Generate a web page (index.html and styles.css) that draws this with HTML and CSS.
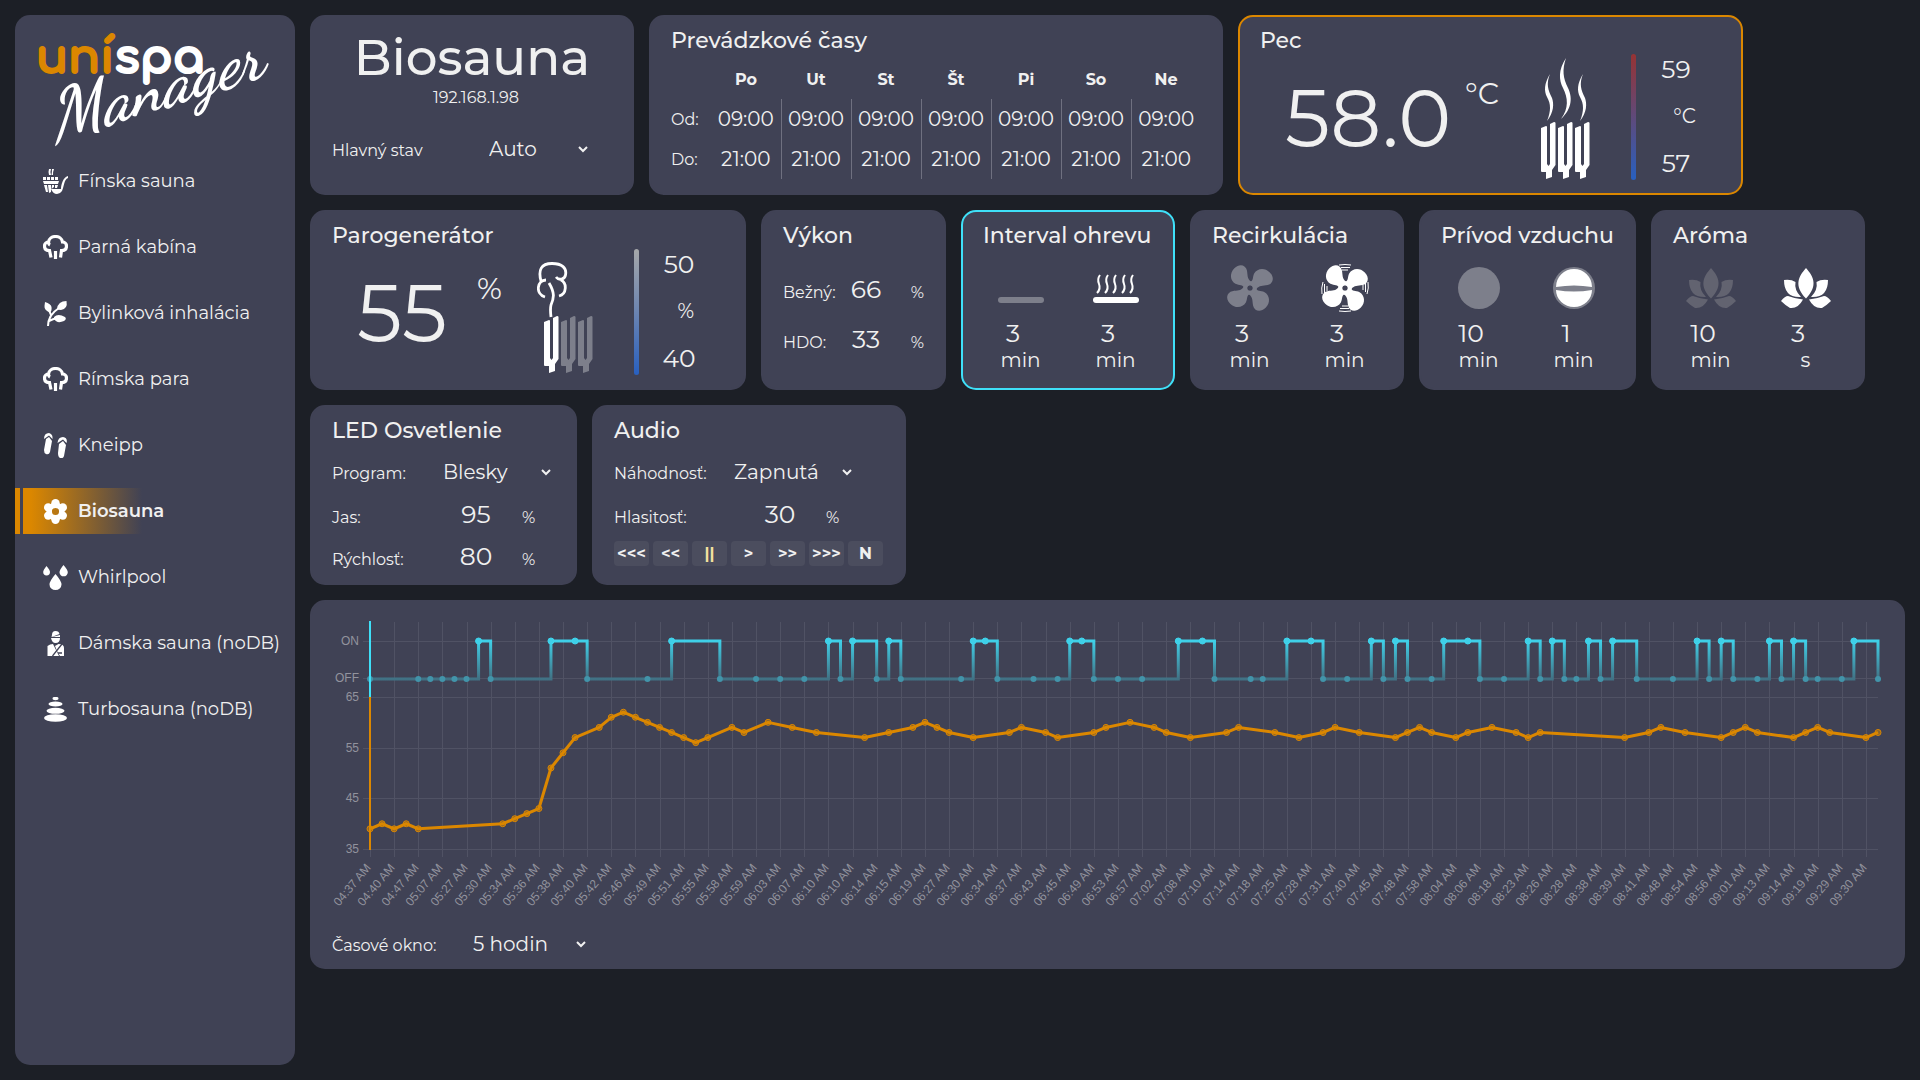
FILE: index.html
```html
<!DOCTYPE html>
<html lang="sk">
<head>
<meta charset="utf-8">
<meta name="viewport" content="width=device-width, initial-scale=1">
<title>Unispa Manager – Biosauna</title>
<link rel="stylesheet" href="styles.css">
</head>
<body>
<svg class="defs" width="0" height="0" aria-hidden="true">
  <symbol id="i-cloud" viewBox="0 0 25 25"><path d="M8 22.500 6.500 15.500C3 15.500 1.500 13.500 1.500 11 1.500 8.500 3.500 7 5.500 7 6 3.500 9 1.500 12.500 1.500S19 3.500 19.500 7C21.500 7 23.500 8.500 23.500 11 23.500 13.500 22 15.500 18.500 15.500L17.500 22.500M12.500 16V24M5.500 7C5.500 8.500 6 9.500 7 10" fill="none" stroke="#fff" stroke-width="3.200"/></symbol>
  <symbol id="i-chevron" viewBox="0 0 12 8"><path d="M2 2 6 6 10 2" fill="none" stroke="#f1f1f1" stroke-width="2"/></symbol>
  <symbol id="i-tube" viewBox="0 0 15 58"><path d="M0 6 5 4Q6 4 6 5V42L7.500 44 9 42V2L13 0Q14.500 0 14.500 1V43L11 48V55L5 57V50H1Q0 50 0 49Z" fill="currentColor"/></symbol>
  <symbol id="i-fan" viewBox="-24 -24 48 48">
    <g fill="currentColor">
      <path d="M1-6C-3-9-2-12-3-17-4-22-10-24-15-19-20-14-19-7-14-4-10-2-7-4-5 1Z"/>
      <path d="M1-6C-3-9-2-12-3-17-4-22-10-24-15-19-20-14-19-7-14-4-10-2-7-4-5 1Z" transform="rotate(90)"/>
      <path d="M1-6C-3-9-2-12-3-17-4-22-10-24-15-19-20-14-19-7-14-4-10-2-7-4-5 1Z" transform="rotate(180)"/>
      <path d="M1-6C-3-9-2-12-3-17-4-22-10-24-15-19-20-14-19-7-14-4-10-2-7-4-5 1Z" transform="rotate(270)"/>
    </g>
    <circle r="4.500" fill="none" stroke="currentColor" stroke-width="4"/><circle r="2.200" fill="#404255"/>
  </symbol>
  <symbol id="i-lotus" viewBox="0 0 50 40"><path fill="currentColor" d="M25 0C33 9 37 18 25 30.500 13 18 17 9 25 0ZM3 12Q10 11 14.500 14 13 22 20 29 3 30 3 12ZM47 12Q40 11 35.500 14 37 22 30 29 47 30 47 12ZM0 33Q4 28 7 28 15 31 22 31.500 17 41 9 40 4 37 0 33ZM50 33Q46 28 43 28 35 31 28 31.500 33 41 41 40 46 37 50 33Z"/></symbol>
</svg>

<div class="app">
  <aside class="sidebar">
    <svg class="logo" viewBox="0 0 280 143" role="img" aria-label="unispa Manager">
      <text x="21" y="58" class="logo-word"><tspan class="logo-accent">uní</tspan><tspan>spa</tspan></text>
      <text class="logo-script" transform="translate(40 125) rotate(-17)">Manager</text>
    </svg>
    <nav class="nav">
      <a class="nav-item" href="#finska">
        <svg class="nav-icon" viewBox="0 0 25 25"><path fill="#fff" d="M6 0 8 0Q7 2 8 6H6Q5 3 6 0ZM9 0H11Q10 2 10 6H8.500Q9 3 9 0ZM0 8H3V11H0ZM4 8H7V11H4ZM8 8H11V11H8ZM12 8H15V11H12ZM0 12H16L15 15H1ZM1 16H4L5 23H3ZM5 16H8V23L6 24ZM9 16H11V18L8.500 20ZM12 16H15L14 19H12Z"/><path fill="#fff" d="M8 20H18C18 16 20 8 25 7V9C21 10 21 18 19 22Q17 25 14 25 10 25 8 20Z"/></svg>
        <span>Fínska sauna</span></a>
      <a class="nav-item" href="#parna"><svg class="nav-icon"><use href="#i-cloud"/></svg><span>Parná kabína</span></a>
      <a class="nav-item" href="#bylinkova">
        <svg class="nav-icon" viewBox="0 0 25 25"><path fill="#fff" d="M2 1Q8 3 8.500 6 9 10 7 11.500 1 9 1.500 5ZM23.500 0Q25 8 18 9 15 9 14 8 15 0 23.500 0ZM11 16Q15 12 22 16 24 18 21 20 14 23 11 18Z"/><path d="M5 25Q5 14 16 7M6 9Q7 12 8.500 15M6 20Q10 18 14 17" fill="none" stroke="#fff" stroke-width="2"/></svg>
        <span>Bylinková inhalácia</span></a>
      <a class="nav-item" href="#rimska"><svg class="nav-icon"><use href="#i-cloud"/></svg><span>Rímska para</span></a>
      <a class="nav-item" href="#kneipp">
        <svg class="nav-icon" viewBox="0 0 25 25"><path fill="#fff" d="M1 6Q1 0 6 0 10 1 9.500 6L6 2.500ZM3 6 6 4 9 8 7 19Q6 22 3 21 1 20 1 17ZM14.500 10Q15 4 20 4 25 5 23.500 10L20 6.500ZM16 11 20 8 23 12 21 23Q20 26 17 25 15 24 15 20Z"/></svg>
        <span>Kneipp</span></a>
      <a class="nav-item nav-item-active" href="#biosauna" aria-current="page">
        <svg class="nav-icon" viewBox="0 0 25 25"><g fill="none" stroke="#fff" stroke-width="5.500"><circle cx="12.500" cy="12.500" r="6.300"/></g><g fill="#fff"><circle cx="12.500" cy="4.200" r="4.200"/><circle cx="12.500" cy="20.800" r="4.200"/><circle cx="5.200" cy="8.400" r="4.200"/><circle cx="19.800" cy="8.400" r="4.200"/><circle cx="5.200" cy="16.600" r="4.200"/><circle cx="19.800" cy="16.600" r="4.200"/></g></svg>
        <span>Biosauna</span></a>
      <a class="nav-item" href="#whirlpool">
        <svg class="nav-icon" viewBox="0 0 25 25"><path fill="#fff" d="M3.500 1Q7 5 7 7A3.400 3.400 0 0 1 .2 7Q.2 5 3.500 1ZM20.500 0Q24.800 5 24.800 7.200A4 4 0 0 1 16.500 7.200Q16.500 5 20.500 0ZM12.500 9Q18.500 16 18.500 19.500A6 5.500 0 0 1 6.500 19.500Q6.500 16 12.500 9Z"/></svg>
        <span>Whirlpool</span></a>
      <a class="nav-item" href="#damska">
        <svg class="nav-icon" viewBox="0 0 25 25"><path fill="#fff" d="M9 4Q9 0 12.500 0 16 0 16.500 3L8.500 6ZM17 4V6H9ZM8 7H17Q17 12 12.500 12 9 12 8 7ZM4.500 15Q7 13 10 13L16 25H4.500ZM12 15 15.500 13Q21 13 21 17V25H17L14 20Z"/><path d="M9.500 25 19 13M15 22H19" stroke="#404255" stroke-width="1.300"/></svg>
        <span>Dámska sauna (noDB)</span></a>
      <a class="nav-item" href="#turbo">
        <svg class="nav-icon" viewBox="0 0 25 25"><g fill="#fff"><ellipse cx="12.500" cy="1.500" rx="3" ry="1.700"/><ellipse cx="12.500" cy="7" rx="7" ry="2.600"/><ellipse cx="12.500" cy="13.800" rx="9" ry="3"/><ellipse cx="12.500" cy="21" rx="11.500" ry="3.800"/></g></svg>
        <span>Turbosauna (noDB)</span></a>
    </nav>
  </aside>

  <main class="main">
    <section class="card card-status">
      <h1 class="name">Biosauna</h1>
      <p class="ip">192.168.1.98</p>
      <div class="field-row">
        <label class="label" for="state">Hlavný stav</label>
        <span class="select"><select id="state"><option>Auto</option></select><svg class="chevron"><use href="#i-chevron"/></svg></span>
      </div>
    </section>

    <section class="card card-times">
      <h2 class="title">Prevádzkové časy</h2>
      <table class="times">
        <thead><tr><td></td><th scope="col">Po</th><th scope="col">Ut</th><th scope="col">St</th><th scope="col">Št</th><th scope="col">Pi</th><th scope="col">So</th><th scope="col">Ne</th></tr></thead>
        <tbody>
          <tr><th scope="row">Od:</th><td><input value="09:00" aria-label="Po od"></td><td><input value="09:00" aria-label="Ut od"></td><td><input value="09:00" aria-label="St od"></td><td><input value="09:00" aria-label="Št od"></td><td><input value="09:00" aria-label="Pi od"></td><td><input value="09:00" aria-label="So od"></td><td><input value="09:00" aria-label="Ne od"></td></tr>
          <tr><th scope="row">Do:</th><td><input value="21:00" aria-label="Po do"></td><td><input value="21:00" aria-label="Ut do"></td><td><input value="21:00" aria-label="St do"></td><td><input value="21:00" aria-label="Št do"></td><td><input value="21:00" aria-label="Pi do"></td><td><input value="21:00" aria-label="So do"></td><td><input value="21:00" aria-label="Ne do"></td></tr>
        </tbody>
      </table>
    </section>

    <section class="card card-stove card-heating">
      <h2 class="title">Pec</h2>
      <div class="gauge">
        <span class="reading">58.0</span><span class="unit">°C</span>
        <svg class="stove-icon" viewBox="0 0 49 121">
          <g fill="#fff"><path d="M25 0C17 12 18 22 22 30 27 40 28 50 20 61 32 50 31 38 27 30 22 20 21 12 25 0ZM9 16C3 26 3 33 6 39 10 46 10 53 6 63 13 54 13 46 11 40 7 32 5 26 9 16ZM42 16C36 26 36 33 39 39 43 46 43 53 39 63 46 54 46 46 44 40 40 32 38 26 42 16Z"/></g>
          <g color="#fff"><use href="#i-tube" x="0" y="64" width="15" height="58"/><use href="#i-tube" x="17" y="64" width="15" height="58"/><use href="#i-tube" x="34" y="64" width="15" height="58"/></g>
        </svg>
        <div class="scale scale-heat"></div>
        <div class="limits"><input class="num" value="59" aria-label="Horná teplota"><span class="limits-unit">°C</span><input class="num" value="57" aria-label="Dolná teplota"></div>
      </div>
    </section>

    <section class="card card-steam">
      <h2 class="title">Parogenerátor</h2>
      <div class="gauge">
        <span class="reading">55</span><span class="unit">%</span>
        <svg class="steam-icon" viewBox="0 0 57 111">
          <path d="M4 19C1 8 4 1.500 15 1.500 25 1.500 30 6 28.500 13 28 17 22 19 19 15M9 18C0 18-2 32 8 35M24 18C30 21 30 32 22 34M12 21C18 31 17 36 14 43Q13 47 14 55" fill="none" stroke="#fff" stroke-width="2.800"/>
          <g color="#fff"><use href="#i-tube" x="7" y="54" width="15" height="58"/></g>
          <g color="#7d7f8b"><use href="#i-tube" x="24" y="54" width="15" height="58"/><use href="#i-tube" x="41" y="54" width="15" height="58"/></g>
        </svg>
        <div class="scale scale-steam"></div>
        <div class="limits"><input class="num" value="50" aria-label="Horná vlhkosť"><span class="limits-unit">%</span><input class="num" value="40" aria-label="Dolná vlhkosť"></div>
      </div>
    </section>

    <section class="card card-power">
      <h2 class="title">Výkon</h2>
      <div class="power">
        <label class="label" for="p1">Bežný:</label><input class="num" id="p1" value="66"><span class="label">%</span>
        <label class="label" for="p2">HDO:</label><input class="num" id="p2" value="33"><span class="label">%</span>
      </div>
    </section>

    <section class="card card-interval card-running">
      <h2 class="title">Interval ohrevu</h2>
      <div class="pair">
        <div class="cell"><svg class="cell-icon dim" viewBox="0 0 50 50"><rect x="2" y="34" width="46" height="6" rx="3" fill="currentColor"/></svg><input class="num" value="3" aria-label="Pauza"><span class="cell-unit">min</span></div>
        <div class="cell"><svg class="cell-icon" viewBox="0 0 50 50"><rect x="2" y="34" width="46" height="6" rx="3" fill="currentColor"/><path d="M9 12Q6 16 8 21T6 30M17 12Q14 16 16 21T14 30M25 12Q22 16 24 21T22 30M34 12Q31 16 33 21T31 30M42 12Q39 16 41 21T39 30" fill="none" stroke="currentColor" stroke-width="2"/></svg><input class="num" value="3" aria-label="Ohrev"><span class="cell-unit">min</span></div>
      </div>
    </section>

    <section class="card card-interval">
      <h2 class="title">Recirkulácia</h2>
      <div class="pair">
        <div class="cell"><svg class="cell-icon dim"><use href="#i-fan"/></svg><input class="num" value="3" aria-label="Pauza"><span class="cell-unit">min</span></div>
        <div class="cell"><svg class="cell-icon" viewBox="0 0 50 50"><use href="#i-fan" width="50" height="50"/><path d="M19 2Q25 1 31 2M21 4.500H30M22 7H28M48 19Q49 25 47 31M45.500 20V29M43 22V27M19 48Q25 49 31 48M20 45.500H29M22 43H28M2 31Q1 25 3 19M4.500 30V21M7 28V23" fill="none" stroke="currentColor" stroke-width="1"/></svg><input class="num" value="3" aria-label="Chod"><span class="cell-unit">min</span></div>
      </div>
    </section>

    <section class="card card-air">
      <h2 class="title">Prívod vzduchu</h2>
      <div class="pair">
        <div class="cell"><svg class="cell-icon dim" viewBox="0 0 50 50"><circle cx="25" cy="25" r="21" fill="currentColor"/></svg><input class="num" value="10" aria-label="Zatvorené"><span class="cell-unit">min</span></div>
        <div class="cell"><svg class="cell-icon" viewBox="0 0 50 50"><circle cx="25" cy="25" r="21" fill="#7d7f8b"/><path d="M7 24A18 18 0 0 1 43 24Q25 21 7 24ZM7 27Q25 30 43 27A18 17 0 0 1 7 27Z" fill="currentColor"/></svg><input class="num" value="1" aria-label="Otvorené"><span class="cell-unit">min</span></div>
      </div>
    </section>

    <section class="card card-interval">
      <h2 class="title">Aróma</h2>
      <div class="pair">
        <div class="cell"><svg class="cell-icon faint"><use href="#i-lotus"/></svg><input class="num" value="10" aria-label="Pauza"><span class="cell-unit">min</span></div>
        <div class="cell"><svg class="cell-icon"><use href="#i-lotus"/></svg><input class="num" value="3" aria-label="Dávka"><span class="cell-unit">s</span></div>
      </div>
    </section>

    <section class="card card-led">
      <h2 class="title">LED Osvetlenie</h2>
      <div class="fields">
        <div class="field-row">
          <label class="label" for="program">Program:</label>
          <span class="select"><select id="program"><option>Blesky</option></select><svg class="chevron"><use href="#i-chevron"/></svg></span>
        </div>
        <div class="field-row"><label class="label" for="jas">Jas:</label><input class="num" id="jas" value="95"><span class="label">%</span></div>
        <div class="field-row"><label class="label" for="rychlost">Rýchlosť:</label><input class="num" id="rychlost" value="80"><span class="label">%</span></div>
      </div>
    </section>

    <section class="card card-audio">
      <h2 class="title">Audio</h2>
      <div class="fields">
        <div class="field-row">
          <label class="label" for="shuffle">Náhodnosť:</label>
          <span class="select"><select id="shuffle"><option>Zapnutá</option></select><svg class="chevron"><use href="#i-chevron"/></svg></span>
        </div>
        <div class="field-row"><label class="label" for="volume">Hlasitosť:</label><input class="num" id="volume" value="30"><span class="label">%</span></div>
        <div class="buttons">
          <button type="button">&lt;&lt;&lt;</button><button type="button">&lt;&lt;</button><button type="button" class="paused">||</button><button type="button">&gt;</button><button type="button">&gt;&gt;</button><button type="button">&gt;&gt;&gt;</button><button type="button">N</button>
        </div>
      </div>
    </section>

    <section class="card card-chart">
      <svg class="chart" id="chart" role="img" aria-label="Priebeh teploty a ohrevu"></svg>
      <div class="field-row">
        <label class="label" for="range">Časové okno:</label>
        <span class="select"><select id="range"><option>5 hodin</option></select><svg class="chevron"><use href="#i-chevron"/></svg></span>
      </div>
    </section>
  </main>
</div>
<script src="chart.js"></script>
</body>
</html>
```

FILE: styles.css
```css
* { box-sizing: border-box; }

body {
  margin: 0;
  background: #1c1f26;
  color: #f0f0f0;
  font-family: "Montserrat", "Inter", sans-serif;
  font-size: 16px;
}

h1, h2, p { margin: 0; font-weight: 500; }

.defs { position: absolute; }

.app {
  display: flex;
  gap: 15px;
  min-height: 100vh;
  padding: 15px;
}

/* Sidebar */
.sidebar {
  flex: 0 0 280px;
  background: #404255;
  border-radius: 15px;
}

.logo { display: block; width: 100%; }
.logo-word { font: 700 47px "Comfortaa", "Quicksand", "Varela Round", "Inter", sans-serif; fill: #fff; stroke: #fff; stroke-width: 2; }
.logo-accent { fill: #db8700; stroke: #db8700; }
.logo-script { font: italic 700 68px "Dancing Script", "Great Vibes", "Satisfy", "Liberation Serif", serif; fill: #fff; }

.nav { display: flex; flex-direction: column; gap: 20px; }

.nav-item {
  display: flex;
  align-items: center;
  gap: 10px;
  height: 46px;
  padding-left: 28px;
  color: inherit;
  font-size: 18px;
  text-decoration: none;
  white-space: nowrap;
}

.nav-item-active {
  font-weight: 600;
  background: linear-gradient(90deg, #db8700 5px, #404255 5px, #404255 8px, #db8700 8px, #db8700 16px, #404255 127px);
}

.nav-icon { flex: none; width: 25px; height: 25px; }

/* Cards */
.main {
  flex: 1;
  min-width: 0;
  display: flex;
  flex-wrap: wrap;
  align-content: flex-start;
  gap: 15px;
}

.card {
  min-height: 180px;
  padding: 11px 20px;
  background: #404255;
  border: 2px solid #404255;
  border-radius: 15px;
}

.card-heating { border-color: #db8700; }
.card-running { border-color: #3fe0f8; }

.card-status { width: 324px; }
.card-times { width: 574px; }
.card-stove { width: 505px; }
.card-steam { width: 436px; }
.card-power { width: 185px; }
.card-interval { width: 214px; }
.card-air { width: 217px; }
.card-led { width: 267px; }
.card-audio { width: 314px; }
.card-chart { width: 100%; padding: 14px 20px 8px; }

.title { font-size: 22px; line-height: 26px; white-space: nowrap; }
.label { font-size: 16px; white-space: nowrap; }

/* Form controls */
input, select, button {
  margin: 0;
  padding: 0;
  border: 0;
  background: none;
  color: inherit;
  font: inherit;
}

input { width: 60px; text-align: center; font-size: 20px; }
.num { font-size: 25px; line-height: 30px; height: 30px; }

.select { display: flex; align-items: center; justify-content: space-between; font-size: 20px; }
.select select { appearance: none; flex: 1; min-width: 0; height: 30px; line-height: 30px; }
.chevron { width: 12px; height: 8px; }

.fields { display: flex; flex-direction: column; gap: 12px; margin-top: 13px; }
.field-row { display: flex; align-items: baseline; height: 30px; line-height: 30px; }

/* Name and main state */
.name { font-size: 50px; line-height: 60px; text-align: center; }
.ip { font-weight: 400; line-height: 20px; text-align: center; padding-left: 8px; }
.card-status .field-row { margin-top: 26px; }
.card-status .label { width: 157px; }
.card-status .select { width: 100px; }

/* Opening hours */
.times { border-collapse: collapse; table-layout: fixed; width: 530px; margin-top: 5px; }
.times tr { height: 40px; }
.times th, .times td { padding: 0; width: 70px; text-align: center; }
.times tr > :first-child { width: 40px; text-align: left; font-weight: 400; }
.times thead th { font-weight: 700; }
.times tbody td + td { border-left: 1px solid #6f7080; }

/* Readings with limits */
.gauge { display: grid; grid-template-columns: 145px 60px 97px 5px 1fr; height: 126px; }
.card-stove .gauge { grid-template-columns: 205px 76px 90px 5px 1fr; }
.reading { font-size: 80px; line-height: 80px; padding: 25px 0 0 25px; }
.unit { font-size: 30px; line-height: 36px; padding-top: 22px; }
.steam-icon { width: 57px; height: 111px; margin-top: 13px; }
.stove-icon { width: 49px; height: 121px; margin-top: 4px; }
.scale { border-radius: 3px; }
.scale-heat { background: linear-gradient(#963334, #2860c0); }
.scale-steam { background: linear-gradient(#a6a7a9, #7288b0 45%, #2860c0); }
.limits { display: flex; flex-direction: column; justify-content: space-between; align-items: flex-start; padding-bottom: 2px; }
.limits .num { margin-left: 10px; }
.limits-unit { font-size: 20px; width: 55px; text-align: right; }
.card-stove .limits-unit { width: 60px; }

/* Power */
.power { display: grid; grid-template-columns: 53px 60px 1fr; row-gap: 20px; align-items: baseline; padding-top: 25px; }
.power .label:nth-child(3n) { text-align: right; }

/* Pause and run pairs */
.pair { display: grid; grid-template-columns: 95px 95px; margin: 14px -10px 0; }
.cell { display: flex; flex-direction: column; align-items: center; }
.cell-icon { width: 50px; height: 50px; color: #fff; }
.cell-icon.dim { color: #7d7f8b; }
.cell-icon.faint { color: #626370; }
.cell .num { width: 76px; margin-right: 15px; margin-top: 5px; }
.cell-unit { font-size: 20px; line-height: 24px; }

/* Lighting */
.card-led .label:first-child { width: 111px; }
.card-led .select { width: 109px; }
.card-led .num { margin-right: 13px; width: 66px; }

/* Audio */
.card-audio .label:first-child { width: 120px; }
.card-audio .select { width: 119px; }
.card-audio .num { margin: 0 16px; width: 60px; }
.buttons { display: flex; gap: 4px; }
.buttons button {
  flex: 0 0 35px;
  height: 25px;
  border-radius: 4px;
  background: #4b4d5e;
  font-size: 16px;
  font-weight: 700;
  line-height: 20px;
}
.buttons .paused { color: #f3e0a0; }

/* Chart */
.chart { display: block; width: 100%; height: 302px; font: 12px "Liberation Sans", sans-serif; }
.card-chart .field-row { margin-top: 11px; }
.card-chart .label { width: 141px; }
.card-chart .select { width: 114px; }
.grid { stroke: #505264; stroke-width: 1; }
.tick { fill: #92939d; }
.temp { fill: none; stroke: #db8700; stroke-width: 3; stroke-linejoin: round; }
.temp-dot { fill: #db870080; stroke: #db8700; }
.heat { fill: none; stroke: url(#heat-fade); stroke-width: 3; }
.dot-on { fill: #3fd0e8; stroke: #3fd6ee; }
.dot-off { fill: #4294aa; }
.axis-heat { stroke: #3fe0f8; stroke-width: 2; }
.axis-temp { stroke: #db8700; stroke-width: 2; }
```

FILE: chart.js
```javascript
// One label for every second sample.
const labels = ("04:37 04:40 04:47 05:07 05:27 05:30 05:34 05:36 05:38 05:40 05:42 05:46 05:49 05:51 05:55 05:58 " +
  "05:59 06:03 06:07 06:10 06:10 06:14 06:15 06:19 06:27 06:30 06:34 06:37 06:43 06:45 06:49 06:53 06:57 07:02 " +
  "07:08 07:10 07:14 07:18 07:25 07:28 07:31 07:40 07:45 07:48 07:58 08:04 08:06 08:18 08:23 08:26 08:28 08:38 " +
  "08:39 08:41 08:48 08:54 08:56 09:01 09:13 09:14 09:19 09:29 09:30").split(" ");

// [sample, degrees]
const temperature = [[0,39],[1,40],[2,39],[3,40],[4,39],[11,40],[12,41],[13,42],[14,43],[15,51],[16,54],[17,57],
  [19,59],[20,61],[21,62],[22,61],[23,60],[24,59],[25,58],[26,57],[27,56],[28,57],[30,59],[31,58],[33,60],[35,59],
  [37,58],[41,57],[43,58],[45,59],[46,60],[47,59],[48,58],[50,57],[53,58],[54,59],[56,58],[57,57],[60,58],[61,59],
  [63,60],[65,59],[66,58],[68,57],[71,58],[72,59],[75,58],[77,57],[79,58],[80,59],[82,58],[85,57],[86,58],[87,59],
  [88,58],[90,57],[91,58],[93,59],[95,58],[96,57],[97,58],[104,57],[106,58],[107,59],[109,58],[112,57],[113,58],
  [114,59],[115,58],[118,57],[119,58],[120,59],[121,58],[124,57],[125,58]];

// [sample, 1 = on]
const heating = [[0,0],[4,0],[5,0],[6,0],[7,0],[8,0],[9,1],[10,0],[15,1],[17,1],[18,0],[23,0],[25,1],[29,0],[32,0],
  [34,0],[36,0],[38,1],[39,0],[40,1],[42,0],[43,1],[44,0],[49,0],[50,1],[51,1],[52,0],[55,0],[57,0],[58,1],[59,1],
  [60,0],[62,0],[64,0],[67,1],[69,1],[70,0],[73,0],[74,0],[76,1],[78,1],[79,0],[81,0],[83,1],[84,0],[85,1],[86,0],
  [88,0],[89,1],[91,1],[92,0],[94,0],[96,1],[97,0],[98,1],[99,0],[100,0],[101,1],[102,0],[103,1],[105,0],[108,0],
  [110,1],[111,0],[112,1],[113,0],[115,0],[116,1],[117,0],[118,1],[119,0],[120,0],[122,0],[123,1],[125,0]];

function draw() {
  const svg = document.getElementById("chart");
  const left = 38;
  const right = svg.getBoundingClientRect().width - 5;
  const x = i => left + i * (right - left) / 125;
  const yT = t => 81 + (65 - t) * 5.07;
  const yH = on => (on ? 25 : 63);
  let out = '<defs><linearGradient id="heat-fade" gradientUnits="userSpaceOnUse" x1="0" y1="25" x2="0" y2="63">' +
    '<stop offset="0" stop-color="#3fd0e8"/><stop offset="1" stop-color="#417184"/></linearGradient></defs>';

  [["ON", 25], ["OFF", 62], ["65", yT(65)], ["55", yT(55)], ["45", yT(45)], ["35", yT(35)]].forEach(([name, y]) => {
    const line = Math.round(y) + 0.5;
    out += `<path class="grid" d="M${left - 7} ${line}H${right}"/>`;
    out += `<text class="tick" x="${left - 11}" y="${line + 3}" text-anchor="end">${name}</text>`;
  });
  labels.forEach((name, i) => {
    const lx = Math.round(x(i * 2)) + 0.5;
    out += `<path class="grid" d="M${lx} 6V241"/>`;
    out += `<text class="tick" text-anchor="end" transform="translate(${lx + 1} 252) rotate(-50)">${name} AM</text>`;
  });

  let d = `M${x(0)} ${yH(0)}`;
  heating.slice(1).forEach(([i, on]) => { d += `H${x(i)}V${yH(on)}`; });
  out += `<path class="heat" d="${d}"/>`;
  heating.forEach(([i, on]) => {
    out += `<circle class="${on ? "dot-on" : "dot-off"}" cx="${x(i)}" cy="${yH(on)}" r="3"/>`;
  });
  out += `<polyline class="temp" points="${temperature.map(([i, t]) => x(i) + "," + yT(t)).join(" ")}"/>`;
  temperature.forEach(([i, t]) => { out += `<circle class="temp-dot" cx="${x(i)}" cy="${yT(t)}" r="3"/>`; });

  out += `<path class="axis-heat" d="M${left} 5V81"/><path class="axis-temp" d="M${left} 81V234"/>`;
  svg.innerHTML = out;
}

draw();
addEventListener("resize", draw);
```
